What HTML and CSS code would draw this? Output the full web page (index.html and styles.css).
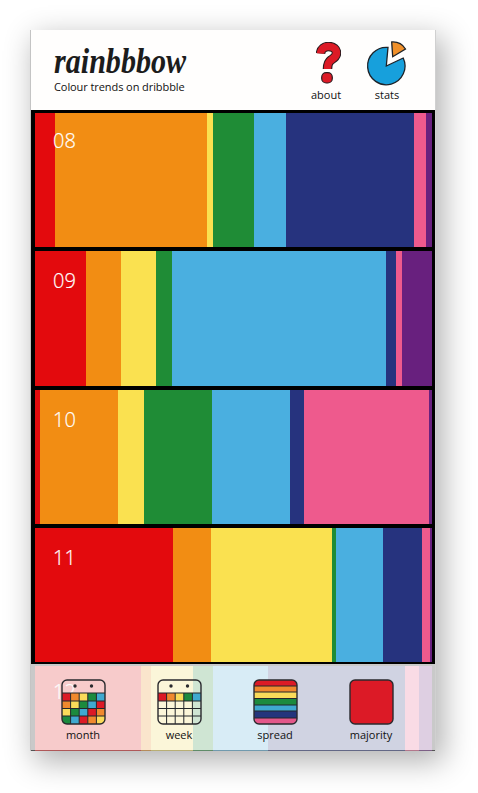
FILE: index.html
```html
<!DOCTYPE html>
<html lang="en">

<head>
    <meta charset="UTF-8">
    <title>rainbbbow</title>
    <link rel="stylesheet" href="styles.css">
</head>

<body>
    <div class="window">
        <header class="top">
            <div class="brand">
                <div class="logo">rainbbbow</div>
                <div class="tagline">Colour trends on dribbble</div>
            </div>
            <nav class="links">
                <a class="link link-about">
                    <svg width="25" height="42" viewBox="0 0 25 42">
                        <path class="q-back" d="M4.5 11.5C5 6.5 8.5 4.5 12.5 4.5C17.5 4.5 20.5 7.2 20.5 11C20.5 15 17.5 16.3 14.8 18.2C12.6 19.8 11.5 21.5 11.5 27" />
                        <path class="q-front" d="M4.5 11.5C5 6.5 8.5 4.5 12.5 4.5C17.5 4.5 20.5 7.2 20.5 11C20.5 15 17.5 16.3 14.8 18.2C12.6 19.8 11.5 21.5 11.5 27" />
                        <rect class="q-dot" x="5.7" y="30.7" width="10.6" height="10.3" rx="4.5" />
                    </svg>
                    <span>about</span>
                </a>
                <a class="link link-stats">
                    <svg width="44" height="48" viewBox="0 0 44 48">
                        <path class="pie-blue" d="M21.3 26L23 7.4A18.7 18.7 0 1 0 38.2 18Z" />
                        <path class="pie-orange" d="M27.7 16.7L26.7 2A15 15 0 0 1 40.5 9Z" />
                    </svg>
                    <span>stats</span>
                </a>
            </nav>
        </header>

        <main class="months">
            <section class="month">
                <span class="month-name month-name-first">08</span>
                <i class="red" style="width:20px"></i><i class="orange" style="width:151.5px"></i><i class="yellow" style="width:6.5px"></i><i class="green" style="width:41px"></i><i class="blue" style="width:31.5px"></i><i class="navy" style="width:128.5px"></i><i class="pink" style="width:12px"></i><i class="purple" style="width:6px"></i>
            </section>
            <section class="month">
                <span class="month-name">09</span>
                <i class="red" style="width:51px"></i><i class="orange" style="width:35px"></i><i class="yellow" style="width:35px"></i><i class="green" style="width:16px"></i><i class="blue" style="width:214px"></i><i class="navy" style="width:10px"></i><i class="pink" style="width:6px"></i><i class="purple" style="width:30px"></i>
            </section>
            <section class="month">
                <span class="month-name">10</span>
                <i class="red" style="width:5px"></i><i class="orange" style="width:78px"></i><i class="yellow" style="width:26px"></i><i class="green" style="width:68px"></i><i class="blue" style="width:78px"></i><i class="navy" style="width:14px"></i><i class="pink" style="width:124.5px"></i><i class="purple" style="width:3.5px"></i>
            </section>
            <section class="month">
                <span class="month-name">11</span>
                <i class="red" style="width:138px"></i><i class="orange" style="width:38px"></i><i class="yellow" style="width:121px"></i><i class="green" style="width:4px"></i><i class="blue" style="width:47px"></i><i class="navy" style="width:39px"></i><i class="pink" style="width:8px"></i><i class="purple" style="width:2px"></i>
            </section>
            <section class="month month-last">
                <span class="month-name month-name-last">12</span>
                <i class="red" style="width:106px"></i><i class="orange" style="width:10px"></i><i class="yellow" style="width:42px"></i><i class="green" style="width:20px"></i><i class="blue" style="width:55px"></i><i class="navy" style="width:137px"></i><i class="pink" style="width:14px"></i><i class="purple" style="width:13px"></i>
            </section>
        </main>

        <footer class="tabs">
            <a class="tab">
                <svg width="45" height="46" viewBox="0 0 45 46">
                    <g class="cells">
                        <path class="f-red" d="M1 14H9.6V22H1Z" /><rect class="f-orange" x="9.6" y="14" width="8.6" height="8" /><rect class="f-yellow" x="18.2" y="14" width="8.6" height="8" /><rect class="f-green" x="26.8" y="14" width="8.6" height="8" /><rect class="f-blue" x="35.4" y="14" width="8.6" height="8" />
                        <rect class="f-orange" x="1" y="22" width="8.6" height="7.5" /><rect class="f-yellow" x="9.6" y="22" width="8.6" height="7.5" /><rect class="f-green" x="18.2" y="22" width="8.6" height="7.5" /><rect class="f-blue" x="26.8" y="22" width="8.6" height="7.5" /><rect class="f-red" x="35.4" y="22" width="8.6" height="7.5" />
                        <rect class="f-yellow" x="1" y="29.5" width="8.6" height="7.5" /><rect class="f-green" x="9.6" y="29.5" width="8.6" height="7.5" /><rect class="f-blue" x="18.2" y="29.5" width="8.6" height="7.5" /><rect class="f-red" x="26.8" y="29.5" width="8.6" height="7.5" /><rect class="f-orange" x="35.4" y="29.5" width="8.6" height="7.5" />
                        <path class="f-green" d="M1 37H9.6V45H5Q1 45 1 41Z" /><rect class="f-blue" x="9.6" y="37" width="8.6" height="8" /><rect class="f-red" x="18.2" y="37" width="8.6" height="8" /><rect class="f-orange" x="26.8" y="37" width="8.6" height="8" /><path class="f-yellow" d="M35.4 37H44V41Q44 45 40 45H35.4Z" />
                    </g>
                    <path class="grid" d="M1 14H44M1 22H44M1 29.5H44M1 37H44M9.6 14V45M18.2 14V45M26.8 14V45M35.4 14V45" />
                    <rect class="frame" x="1" y="1" width="43" height="44" rx="5" />
                    <circle class="pin" cx="14" cy="7" r="1.7" />
                    <circle class="pin" cx="30.5" cy="7" r="1.7" />
                </svg>
                <span>month</span>
            </a>
            <a class="tab">
                <svg width="45" height="46" viewBox="0 0 45 46">
                    <rect class="f-red" x="1" y="14" width="8.6" height="8" /><rect class="f-orange" x="9.6" y="14" width="8.6" height="8" /><rect class="f-yellow" x="18.2" y="14" width="8.6" height="8" /><rect class="f-green" x="26.8" y="14" width="8.6" height="8" /><rect class="f-blue" x="35.4" y="14" width="8.6" height="8" />
                    <path class="grid" d="M1 14H44M1 22H44M1 29.5H44M1 37H44M9.6 14V45M18.2 14V45M26.8 14V45M35.4 14V45" />
                    <rect class="frame" x="1" y="1" width="43" height="44" rx="5" />
                    <circle class="pin" cx="14" cy="7" r="1.7" />
                    <circle class="pin" cx="30.5" cy="7" r="1.7" />
                </svg>
                <span>week</span>
            </a>
            <a class="tab">
                <svg width="45" height="46" viewBox="0 0 45 46">
                    <path class="f-red" d="M1 7V6Q1 1 6 1H39Q44 1 44 6V7Z" />
                    <rect class="f-orange" x="1" y="7" width="43" height="6" />
                    <rect class="f-yellow" x="1" y="13" width="43" height="6.5" />
                    <rect class="f-green" x="1" y="19.5" width="43" height="6.5" />
                    <rect class="f-blue" x="1" y="26" width="43" height="6" />
                    <rect class="f-navy" x="1" y="32" width="43" height="7" />
                    <path class="f-pink" d="M1 39H44V40Q44 45 39 45H6Q1 45 1 40Z" />
                    <path class="grid" d="M1 7H44M1 13H44M1 19.5H44M1 26H44M1 32H44M1 39H44" />
                    <rect class="frame" x="1" y="1" width="43" height="44" rx="5" />
                </svg>
                <span>spread</span>
            </a>
            <a class="tab">
                <svg width="45" height="46" viewBox="0 0 45 46">
                    <rect class="f-red frame-full" x="1" y="1" width="43" height="44" rx="5" />
                </svg>
                <span>majority</span>
            </a>
        </footer>
    </div>
</body>

</html>
```

FILE: styles.css
```css
html,
body {
    height: 100%;
}

body {
    margin: 0;
    padding: 30px 0 0 30px;
    box-sizing: border-box;
    background-color: white;
    font-family: "Open Sans", sans-serif;
    color: #111;
}

.window {
    position: relative;
    width: 404px;
    height: 721px;
    border-left: 1px solid #c4c4c4;
    border-right: 1px solid #d0d0d0;
    background-color: black;
    box-shadow: 6px 9px 28px 2px rgba(0, 0, 0, 0.3);
}

.top {
    height: 80px;
    display: flex;
    justify-content: space-between;
    background-color: #fffefd;
}

.brand {
    padding: 14px 0 0 23px;
}

.logo {
    height: 35px;
    font-family: "Liberation Serif", serif;
    font-style: italic;
    font-weight: bold;
    font-size: 35px;
    line-height: 36px;
    color: #1c1c1c;
    transform: scaleX(0.86);
    transform-origin: left;
}

.tagline {
    font-size: 11px;
    line-height: 15px;
    letter-spacing: -0.08px;
}

.links {
    display: flex;
    align-items: flex-start;
    padding: 10px 26px 0 0;
    gap: 19px;
}

.link {
    display: flex;
    flex-direction: column;
    align-items: center;
    font-size: 11px;
    line-height: 15px;
}

.link-about {
    width: 40px;
    padding-top: 2px;
}

.link-about svg {
    margin-left: 5px;
}

.link-about span {
    margin-top: 3px;
}

.link-stats span {
    margin-top: -1px;
}

.q-back {
    fill: none;
    stroke: #2a1c20;
    stroke-width: 9.5;
}

.q-front {
    fill: none;
    stroke: #dc1a26;
    stroke-width: 7.4;
}

.q-dot {
    fill: #dc1a26;
    stroke: #2a1c20;
    stroke-width: 1.2;
}

.pie-blue {
    fill: #17a0dc;
    stroke: #1d2228;
    stroke-width: 1.3;
}

.pie-orange {
    fill: #f0902a;
    stroke: #1d2228;
    stroke-width: 1.3;
}

.months {
    display: flex;
    flex-direction: column;
    gap: 4px;
    padding: 3px 3px 0 4px;
    height: 638px;
    overflow: hidden;
}

.month {
    position: relative;
    display: flex;
    flex: none;
    height: 134.25px;
}

.month-last {
    height: 85px;
}

.month i {
    display: block;
    flex: none;
    height: 100%;
}

.month-name {
    position: absolute;
    left: 18px;
    top: 16px;
    font-size: 20px;
    line-height: 27px;
    font-weight: 300;
    color: white;
    -webkit-text-stroke: 0.2px white;
}

.month-name-first {
    top: 14px;
}

.month-name-last {
    top: 12px;
}

.red { background-color: #e30a0d; }
.orange { background-color: #f28d13; }
.yellow { background-color: #fae150; }
.green { background-color: #1f8c36; }
.blue { background-color: #4aafe0; }
.navy { background-color: #26337e; }
.pink { background-color: #ee5a8d; }
.purple { background-color: #68207e; }

.tabs {
    position: absolute;
    left: 0;
    right: 0;
    top: 634px;
    height: 87px;
    box-sizing: border-box;
    padding: 15px 4px 0;
    display: grid;
    grid-template-columns: repeat(4, 96px);
    background-color: rgba(251, 251, 251, 0.8);
    background-clip: padding-box;
    border-bottom: 1px solid rgba(140, 140, 140, 0.6);
}

.tab {
    display: flex;
    flex-direction: column;
    align-items: center;
    font-size: 11px;
    line-height: 15px;
}

.tab span {
    margin-top: 2px;
}

.f-red { fill: #dc1a26; }
.f-orange { fill: #f0892e; }
.f-yellow { fill: #fadb5a; }
.f-green { fill: #1c8a3e; }
.f-blue { fill: #3fa9d0; }
.f-navy { fill: #24357c; }
.f-pink { fill: #e4588a; }

.grid {
    fill: none;
    stroke: #22262a;
    stroke-width: 1;
}

.frame {
    fill: none;
    stroke: #2a2a2e;
    stroke-width: 1.4;
}

.frame-full {
    stroke: #2a2a2e;
    stroke-width: 1.4;
}

.pin {
    fill: #2a2a2e;
}
```
